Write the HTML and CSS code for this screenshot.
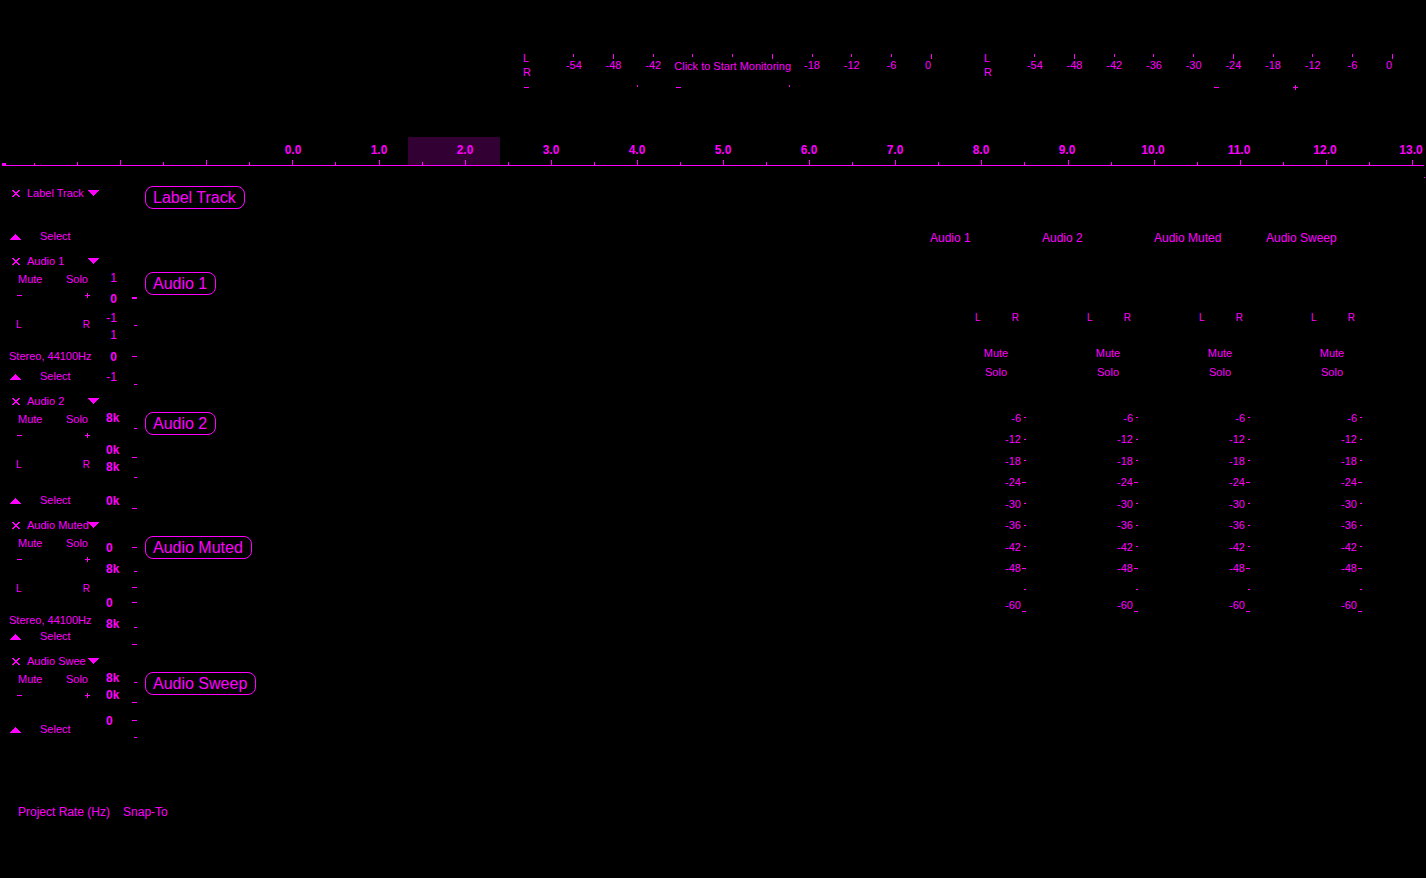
FILE: index.html
```html
<!DOCTYPE html>
<html lang="en">
<head>
<meta charset="utf-8">
<title>Audio Editor</title>
<link rel="stylesheet" href="styles.css">
</head>
<body>
<svg class="defs" aria-hidden="true">
  <symbol id="minus" viewBox="0 0 5 5"><path d="M0 2h5v1H0z"/></symbol>
  <symbol id="plus" viewBox="0 0 5 5"><path d="M0 2h5v1H0zM2 0h1v5H2z"/></symbol>
  <symbol id="close" viewBox="0 0 8 7"><path d="M0 0h2v1H0zM1 1h2v1H1zM2 2h2v1H2zM3 3h2v1H3zM2 4h2v1H2zM1 5h2v1H1zM0 6h2v1H0zM6 0h2v1H6zM5 1h2v1H5zM4 2h2v1H4zM4 4h2v1H4zM5 5h2v1H5zM6 6h2v1H6z"/></symbol>
  <symbol id="down" viewBox="0 0 11 6"><path d="M0 0h11v1H0zM1 1h9v1H1zM2 2h7v1H2zM3 3h5v1H3zM4 4h3v1H4zM5 5h1v1H5z"/></symbol>
  <symbol id="up" viewBox="0 0 11 6"><path d="M5 0h1v1H5zM4 1h3v1H4zM3 2h5v1H3zM2 3h7v1H2zM1 4h9v1H1zM0 5h11v1H0z"/></symbol>
</svg>

<header class="toolbar">
  <div class="meters">
    <section class="meter" aria-label="Recording meter">
      <div class="channels"><span>L</span><span>R</span></div>
      <div class="scale">
        <i></i><i class="major"></i><i></i><i></i><i></i><i class="major"></i><i></i><i></i><i></i><i class="major"></i>
        <span>-54</span><span>-48</span><span>-42</span>
        <button class="monitor" type="button">Click to Start Monitoring</button>
        <span>-18</span><span>-12</span><span>-6</span><span class="end">0</span>
      </div>
    </section>
    <section class="meter" aria-label="Playback meter">
      <div class="channels"><span>L</span><span>R</span></div>
      <div class="scale">
        <i></i><i class="major"></i><i></i><i></i><i></i><i class="major"></i><i></i><i></i><i></i><i class="major"></i>
        <span>-54</span><span>-48</span><span>-42</span><span>-36</span><span>-30</span><span>-24</span><span>-18</span><span>-12</span><span>-6</span><span class="end">0</span>
      </div>
    </section>
  </div>
  <div class="levels">
    <div class="level"><button type="button" aria-label="Lower recording volume"><svg class="sign"><use href="#minus"/></svg></button><i></i></div>
    <div class="level"><button type="button" aria-label="Lower playback volume"><svg class="sign"><use href="#minus"/></svg></button><i></i></div>
    <div class="level speed"><button type="button" aria-label="Slower"><svg class="sign"><use href="#minus"/></svg></button><button type="button" aria-label="Faster"><svg class="sign"><use href="#plus"/></svg></button></div>
  </div>
</header>

<div class="timeline">
  <div class="selection"></div>
  <div class="times"><span>0.0</span><span>1.0</span><span>2.0</span><span>3.0</span><span>4.0</span><span>5.0</span><span>6.0</span><span>7.0</span><span>8.0</span><span>9.0</span><span>10.0</span><span>11.0</span><span>12.0</span><span>13.0</span></div>
  <div class="ticks"><i></i><i></i><i></i><i></i><i></i><i></i><i></i><i></i><i></i><i></i><i></i><i></i><i></i><i></i><i></i><i></i><i></i><i></i><i></i><i></i><i></i><i></i><i></i><i></i><i></i><i></i><i></i><i></i><i></i><i></i><i></i><i></i><i></i></div>
</div>

<main class="workspace">
  <div class="tracks">
    <section class="track label-track">
      <div class="panel">
        <div class="title"><button type="button" aria-label="Close"><svg class="close"><use href="#close"/></svg></button><span>Label Track</span><button type="button" aria-label="Track menu"><svg class="arrow"><use href="#down"/></svg></button></div>
        <div class="foot"><button type="button" aria-label="Collapse"><svg class="arrow"><use href="#up"/></svg></button><button class="select" type="button">Select</button></div>
      </div>
      <div class="clip"><span class="name">Label Track</span></div>
    </section>

    <section class="track stereo">
      <div class="panel">
        <div class="title"><button type="button" aria-label="Close"><svg class="close"><use href="#close"/></svg></button><span>Audio 1</span><button type="button" aria-label="Track menu"><svg class="arrow"><use href="#down"/></svg></button></div>
        <div class="switches"><button type="button">Mute</button><button type="button">Solo</button></div>
        <div class="gain"><svg class="sign"><use href="#minus"/></svg><svg class="sign"><use href="#plus"/></svg></div>
        <div class="pan"><span>L</span><span>R</span></div>
        <div class="info">Stereo, 44100Hz</div>
        <div class="foot"><button type="button" aria-label="Collapse"><svg class="arrow"><use href="#up"/></svg></button><button class="select" type="button">Select</button></div>
      </div>
      <svg class="vruler" width="32" height="140">
        <g class="linear"><text x="11" y="30">1</text><text class="bold" x="11" y="51">0</text><text x="11" y="70">-1</text><text x="11" y="87">1</text><text class="bold" x="11" y="109">0</text><text x="11" y="129">-1</text></g>
        <path d="M26 45h5v2h-5zM28 73h3v1h-3zM26 104h5v1h-5zM28 132h3v1h-3z"/>
      </svg>
      <div class="clip"><span class="name">Audio 1</span></div>
    </section>

    <section class="track compact">
      <div class="panel">
        <div class="title"><button type="button" aria-label="Close"><svg class="close"><use href="#close"/></svg></button><span>Audio 2</span><button type="button" aria-label="Track menu"><svg class="arrow"><use href="#down"/></svg></button></div>
        <div class="switches"><button type="button">Mute</button><button type="button">Solo</button></div>
        <div class="gain"><svg class="sign"><use href="#minus"/></svg><svg class="sign"><use href="#plus"/></svg></div>
        <div class="pan"><span>L</span><span>R</span></div>
        <div class="foot"><button type="button" aria-label="Collapse"><svg class="arrow"><use href="#up"/></svg></button><button class="select" type="button">Select</button></div>
      </div>
      <svg class="vruler" width="32" height="124">
        <g class="bold"><text y="30">8k</text><text y="62">0k</text><text y="79">8k</text><text y="113">0k</text></g>
        <path d="M28 36h3v1h-3zM26 65h5v1h-5zM28 85h3v1h-3zM26 116h5v1h-5z"/>
      </svg>
      <div class="clip"><span class="name">Audio 2</span></div>
    </section>

    <section class="track multi">
      <div class="panel">
        <div class="title"><button type="button" aria-label="Close"><svg class="close"><use href="#close"/></svg></button><span>Audio Muted</span><button type="button" aria-label="Track menu"><svg class="arrow"><use href="#down"/></svg></button></div>
        <div class="switches"><button type="button">Mute</button><button type="button">Solo</button></div>
        <div class="gain"><svg class="sign"><use href="#minus"/></svg><svg class="sign"><use href="#plus"/></svg></div>
        <div class="pan"><span>L</span><span>R</span></div>
        <div class="info">Stereo, 44100Hz</div>
        <div class="foot"><button type="button" aria-label="Collapse"><svg class="arrow"><use href="#up"/></svg></button><button class="select" type="button">Select</button></div>
      </div>
      <svg class="vruler" width="32" height="136">
        <g class="bold"><text y="36">0</text><text y="57">8k</text><text y="91">0</text><text y="112">8k</text></g>
        <path d="M26 31h5v1h-5zM28 55h3v1h-3zM26 71h5v1h-5zM26 86h5v1h-5zM28 111h3v1h-3zM26 128h5v1h-5z"/>
      </svg>
      <div class="clip"><span class="name">Audio Muted</span></div>
    </section>

    <section class="track short">
      <div class="panel">
        <div class="title"><button type="button" aria-label="Close"><svg class="close"><use href="#close"/></svg></button><span>Audio Swee</span><button type="button" aria-label="Track menu"><svg class="arrow"><use href="#down"/></svg></button></div>
        <div class="switches"><button type="button">Mute</button><button type="button">Solo</button></div>
        <div class="gain"><svg class="sign"><use href="#minus"/></svg><svg class="sign"><use href="#plus"/></svg></div>
        <div class="foot"><button type="button" aria-label="Collapse"><svg class="arrow"><use href="#up"/></svg></button><button class="select" type="button">Select</button></div>
      </div>
      <svg class="vruler" width="32" height="93">
        <g class="bold"><text y="30">8k</text><text y="47">0k</text><text y="73">0</text></g>
        <path d="M28 30h3v1h-3zM26 50h5v1h-5zM26 68h5v1h-5zM28 85h3v1h-3z"/>
      </svg>
      <div class="clip"><span class="name">Audio Sweep</span></div>
    </section>
  </div>

  <div class="mixer">
    <section class="strip">
      <h2>Audio 1</h2>
      <div class="balance"><span>L</span><span>R</span></div>
      <div class="toggles"><button type="button">Mute</button><button type="button">Solo</button></div>
      <ol><li>-6</li><li>-12</li><li>-18</li><li class="major">-24</li><li>-30</li><li>-36</li><li>-42</li><li class="major">-48</li><li></li><li class="major"><span>-60</span></li></ol>
    </section>
    <section class="strip">
      <h2>Audio 2</h2>
      <div class="balance"><span>L</span><span>R</span></div>
      <div class="toggles"><button type="button">Mute</button><button type="button">Solo</button></div>
      <ol><li>-6</li><li>-12</li><li>-18</li><li class="major">-24</li><li>-30</li><li>-36</li><li>-42</li><li class="major">-48</li><li></li><li class="major"><span>-60</span></li></ol>
    </section>
    <section class="strip">
      <h2>Audio Muted</h2>
      <div class="balance"><span>L</span><span>R</span></div>
      <div class="toggles"><button type="button">Mute</button><button type="button">Solo</button></div>
      <ol><li>-6</li><li>-12</li><li>-18</li><li class="major">-24</li><li>-30</li><li>-36</li><li>-42</li><li class="major">-48</li><li></li><li class="major"><span>-60</span></li></ol>
    </section>
    <section class="strip">
      <h2>Audio Sweep</h2>
      <div class="balance"><span>L</span><span>R</span></div>
      <div class="toggles"><button type="button">Mute</button><button type="button">Solo</button></div>
      <ol><li>-6</li><li>-12</li><li>-18</li><li class="major">-24</li><li>-30</li><li>-36</li><li>-42</li><li class="major">-48</li><li></li><li class="major"><span>-60</span></li></ol>
    </section>
  </div>

  <div class="scroll-edge"><i></i></div>
</main>

<footer class="status">
  <span>Project Rate (Hz)</span>
  <span>Snap-To</span>
</footer>
</body>
</html>
```
FILE: styles.css
```css
* {
  box-sizing: border-box;
}

body {
  margin: 0;
  min-height: 100vh;
  display: flex;
  flex-direction: column;
  background: #000;
  color: #f0f;
  font: 11px/14px "Liberation Sans", Arial, sans-serif;
  overflow-x: hidden;
}

button {
  display: block;
  margin: 0;
  padding: 0;
  border: 0;
  background: none;
  color: inherit;
  font: inherit;
  white-space: nowrap;
}

svg {
  display: block;
  flex: none;
  fill: #f0f;
}

i {
  display: block;
}

.defs {
  position: absolute;
  width: 0;
  height: 0;
}

.sign {
  width: 5px;
  height: 5px;
}

.close {
  width: 8px;
  height: 7px;
}

.arrow {
  width: 11px;
  height: 6px;
}

/* Meters */
.toolbar {
  padding: 51px 0 41px;
}

.meters {
  display: grid;
  grid-template-columns: 1fr 1fr;
  gap: 33px;
  padding: 0 14px 0 523px;
}

.meter {
  display: flex;
}

.channels {
  display: flex;
  flex-direction: column;
  width: 31px;
}

.scale {
  flex: 1;
  display: grid;
  grid-template-columns: repeat(10, minmax(0, 1fr));
  grid-template-rows: 5px 13px;
  justify-items: center;
  padding-top: 3px;
  line-height: 13px;
}

.scale i {
  width: 1px;
  height: 3px;
  background: #f0f;
}

.scale i.major {
  height: 5px;
}

.scale .end {
  padding-right: 6px;
}

.monitor {
  grid-column: span 3;
  line-height: 15px;
}

.levels {
  display: flex;
  align-items: center;
  gap: 38px;
  height: 17px;
  padding: 0 128px 0 524px;
}

.level {
  display: flex;
  justify-content: space-between;
  width: 114px;
}

.level i {
  width: 1px;
  height: 2px;
  background: #f0f;
}

.speed {
  width: 84px;
  margin-left: auto;
}

/* Timeline */
.timeline {
  position: relative;
  margin: 0 2px;
  padding-top: 4px;
  border-bottom: 1px solid #f0f;
}

.timeline::before {
  content: "";
  position: absolute;
  left: 0;
  bottom: 0;
  width: 4px;
  height: 2px;
  background: #f0f;
}

.selection {
  position: absolute;
  top: 0;
  bottom: 0;
  left: 406px;
  width: 92px;
  background: #303;
}

.times {
  position: relative;
  display: grid;
  grid-template-columns: repeat(14, minmax(0, 1fr));
  margin: 0 -30px 1px 248px;
  font-size: 12px;
  font-weight: bold;
  line-height: 18px;
  text-align: center;
}

.ticks {
  position: relative;
  display: flex;
  align-items: flex-end;
  height: 5px;
  padding: 0 11px 0 32px;
}

.ticks i {
  flex: 1;
}

.ticks i::before {
  content: "";
  display: block;
  width: 1px;
  height: 3px;
  background: #f0f;
}

.ticks i:nth-child(odd)::before {
  height: 5px;
}

.ticks i:first-child::before {
  height: 2px;
}

.ticks i:last-child {
  flex: none;
}

/* Tracks */
.workspace {
  display: grid;
  grid-template-columns: 1fr 448px 52px;
}

.tracks {
  padding-top: 18px;
}

.track {
  display: flex;
}

.label-track {
  min-height: 68px;
}

.stereo {
  min-height: 140px;
}

.compact {
  min-height: 124px;
}

.multi {
  min-height: 136px;
}

.short {
  min-height: 93px;
}

.panel {
  flex: none;
  display: flex;
  flex-direction: column;
  width: 106px;
}

.title {
  display: grid;
  grid-template-columns: 15px 61px 11px;
  align-items: center;
  height: 18px;
  padding-left: 12px;
  white-space: nowrap;
}

.switches {
  display: flex;
  justify-content: space-between;
  padding: 2px 18px;
}

.gain {
  display: flex;
  align-items: center;
  justify-content: space-between;
  height: 15px;
  padding: 0 16px 0 17px;
}

.pan {
  display: flex;
  align-items: center;
  justify-content: space-between;
  height: 44px;
  padding: 0 16px;
  font-size: 10px;
}

.info {
  padding: 1px 0 0 9px;
  line-height: 17px;
}

.foot {
  display: grid;
  grid-template-columns: 30px auto;
  justify-content: start;
  align-items: center;
  height: 16px;
  margin: auto 0 7px;
  padding-left: 10px;
}

.select {
  padding-bottom: 2px;
}

.vruler {
  font-size: 12px;
}

.vruler .linear {
  text-anchor: end;
}

.vruler .bold {
  font-weight: bold;
}

.clip {
  padding: 20px 0 0 7px;
}

.label-track .clip {
  padding: 2px 0 0 39px;
}

.name {
  display: block;
  padding: 0 8px 0 7px;
  border: 1px solid #f0f;
  border-radius: 8px;
  font-size: 16px;
  line-height: 21px;
  white-space: nowrap;
}

/* Mixer */
.mixer {
  display: grid;
  grid-template-columns: repeat(4, 1fr);
  align-items: start;
  padding-top: 64px;
}

.strip h2 {
  margin: 0 0 66px 4px;
  font-size: 12px;
  font-weight: normal;
  line-height: 16px;
}

.balance {
  display: flex;
  justify-content: space-between;
  width: 44px;
  margin: 0 0 20px 49px;
  font-size: 10px;
  line-height: 12px;
}

.toggles {
  display: grid;
  width: 40px;
  margin: 0 0 25px 50px;
  line-height: 19px;
}

.strip ol {
  display: grid;
  grid-template-rows: repeat(10, 1fr);
  width: 100px;
  height: 215px;
  margin: 0;
  padding: 0;
  list-style: none;
  line-height: 8px;
}

.strip li {
  display: flex;
  justify-content: flex-end;
  align-items: center;
  gap: 3px;
}

.strip li::after {
  content: "";
  width: 2px;
  height: 1px;
  background: #f0f;
}

.strip li.major {
  gap: 1px;
}

.strip li.major::after {
  width: 4px;
}

.strip li span {
  align-self: flex-start;
}

.scroll-edge {
  display: flex;
  justify-content: flex-end;
  padding: 11px 1px 0 0;
}

.scroll-edge i {
  width: 1px;
  height: 1px;
  background: #f0f;
}

/* Footer */
.status {
  display: flex;
  gap: 13px;
  margin-top: auto;
  padding: 16px 18px 58px;
  font-size: 12px;
  line-height: 16px;
}
```
